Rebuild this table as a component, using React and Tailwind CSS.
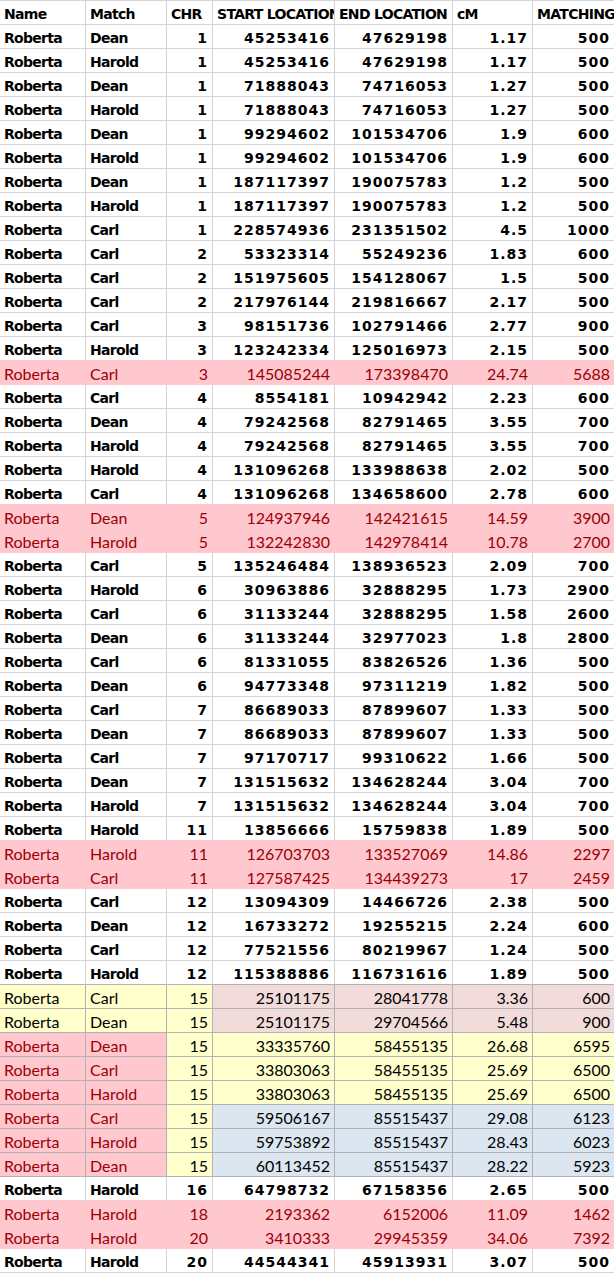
import React from "react";

const raw = `Dean|1|45253416|47629198|1.17|500
Harold|1|45253416|47629198|1.17|500
Dean|1|71888043|74716053|1.27|500
Harold|1|71888043|74716053|1.27|500
Dean|1|99294602|101534706|1.9|600
Harold|1|99294602|101534706|1.9|600
Dean|1|187117397|190075783|1.2|500
Harold|1|187117397|190075783|1.2|500
Carl|1|228574936|231351502|4.5|1000
Carl|2|53323314|55249236|1.83|600
Carl|2|151975605|154128067|1.5|500
Carl|2|217976144|219816667|2.17|500
Carl|3|98151736|102791466|2.77|900
Harold|3|123242334|125016973|2.15|500
Carl|3|145085244|173398470|24.74|5688|ppppppp
Carl|4|8554181|10942942|2.23|600
Dean|4|79242568|82791465|3.55|700
Harold|4|79242568|82791465|3.55|700
Harold|4|131096268|133988638|2.02|500
Carl|4|131096268|134658600|2.78|600
Dean|5|124937946|142421615|14.59|3900|ppppppp
Harold|5|132242830|142978414|10.78|2700|ppppppp
Carl|5|135246484|138936523|2.09|700
Harold|6|30963886|32888295|1.73|2900
Carl|6|31133244|32888295|1.58|2600
Dean|6|31133244|32977023|1.8|2800
Carl|6|81331055|83826526|1.36|500
Dean|6|94773348|97311219|1.82|500
Carl|7|86689033|87899607|1.33|500
Dean|7|86689033|87899607|1.33|500
Carl|7|97170717|99310622|1.66|500
Dean|7|131515632|134628244|3.04|700
Harold|7|131515632|134628244|3.04|700
Harold|11|13856666|15759838|1.89|500
Harold|11|126703703|133527069|14.86|2297|ppppppp
Carl|11|127587425|134439273|17|2459|ppppppp
Carl|12|13094309|14466726|2.38|500
Dean|12|16733272|19255215|2.24|600
Carl|12|77521556|80219967|1.24|500
Harold|12|115388886|116731616|1.89|500
Carl|15|25101175|28041778|3.36|600|yyyrrrr
Dean|15|25101175|29704566|5.48|900|yyyrrrr
Dean|15|33335760|58455135|26.68|6595|ppyyyyy
Carl|15|33803063|58455135|25.69|6500|ppyyyyy
Harold|15|33803063|58455135|25.69|6500|ppyyyyy
Carl|15|59506167|85515437|29.08|6123|ppybbbb
Harold|15|59753892|85515437|28.43|6023|ppybbbb
Dean|15|60113452|85515437|28.22|5923|ppybbbb
Harold|16|64798732|67158356|2.65|500
Harold|18|2193362|6152006|11.09|1462|ppppppp
Harold|20|3410333|29945359|34.06|7392|ppppppp
Harold|20|44544341|45913931|3.07|500`;

const rows = raw.split("\n").map((line) => {
  const [match, chr, start, end, cm, matching, fill] = line.split("|");
  return {
    cells: ["Roberta", match, chr, start, end, cm, matching],
    fill: (fill || "nnnnnnn").split(""),
  };
});

const widths = ["w-[86px]", "w-[81px]", "w-[46px]", "w-[122px]", "w-[118px]", "w-[80px]", "w-[82px]"];

const bg = {
  n: "bg-white",
  p: "bg-[#ffc7ce]",
  y: "bg-[#ffffcc]",
  r: "bg-[#f2dcdb]",
  b: "bg-[#dce6f1]",
};

// boxed cells (the coloured block of chromosome 15) get the darker cell borders
const boxed = (i) => i >= 40 && i <= 47;

function lineColor(i, c, side) {
  const f = rows[i].fill[c];
  if (boxed(i)) return "#b2b2b2";
  if (side === "b") {
    if (i + 1 < rows.length && boxed(i + 1)) return "#b2b2b2";
    const below = i + 1 < rows.length ? rows[i + 1].fill[c] : "n";
    if (f === "p" || below === "p") return "#ffc7ce";
    return "#d4d4d4";
  }
  if (f === "p") return "#ffc7ce";
  return "#d4d4d4";
}

const bCls = {
  "#b2b2b2": "border-b-[#b2b2b2]",
  "#ffc7ce": "border-b-[#ffc7ce]",
  "#d4d4d4": "border-b-[#d4d4d4]",
};
const rCls = {
  "#b2b2b2": "border-r-[#b2b2b2]",
  "#ffc7ce": "border-r-[#ffc7ce]",
  "#d4d4d4": "border-r-[#d4d4d4]",
};

const boldWord = "font-['DejaVu_Sans',sans-serif] font-bold text-[14px] tracking-[-0.7px] pt-[2px] text-black";

function Cell({ i, c, value }) {
  const f = rows[i].fill[c];
  const plain = f === "n";
  const right = c >= 2;
  const font = plain
    ? c >= 2
      ? "font-['DejaVu_Sans',sans-serif] font-bold text-[14px] tracking-[1px] pt-[2px] text-black"
      : boldWord
    : "font-['Lato',sans-serif] text-[16px] pt-[1px] " + (f === "p" ? "text-[#9c0006]" : "text-black");
  return (
    <div
      className={`${widths[c]} shrink-0 h-[24px] border-b border-r overflow-hidden whitespace-nowrap leading-[23px] ${
        right ? "text-right pr-[4px]" : "pl-[4px]"
      } ${bg[f]} ${bCls[lineColor(i, c, "b")]} ${rCls[lineColor(i, c, "r")]} ${font}`}
    >
      {value}
    </div>
  );
}

const headers = ["Name", "Match", "CHR", "START LOCATION", "END LOCATION", "cM", "MATCHING"];

export default function App() {
  return (
    <div className="w-[614px] h-[1274px] overflow-hidden bg-white border-t border-[#d4d4d4]">
      <div className="flex">
        {headers.map((h, c) => (
          <div
            key={h}
            className={`${widths[c]} shrink-0 h-[24px] border-b border-r border-[#d4d4d4] overflow-hidden whitespace-nowrap leading-[23px] pl-[4px] ${boldWord}`}
          >
            {h}
          </div>
        ))}
      </div>
      {rows.map((row, i) => (
        <div key={i} className="flex">
          {row.cells.map((v, c) => (
            <Cell key={c} i={i} c={c} value={v} />
          ))}
        </div>
      ))}
    </div>
  );
}
